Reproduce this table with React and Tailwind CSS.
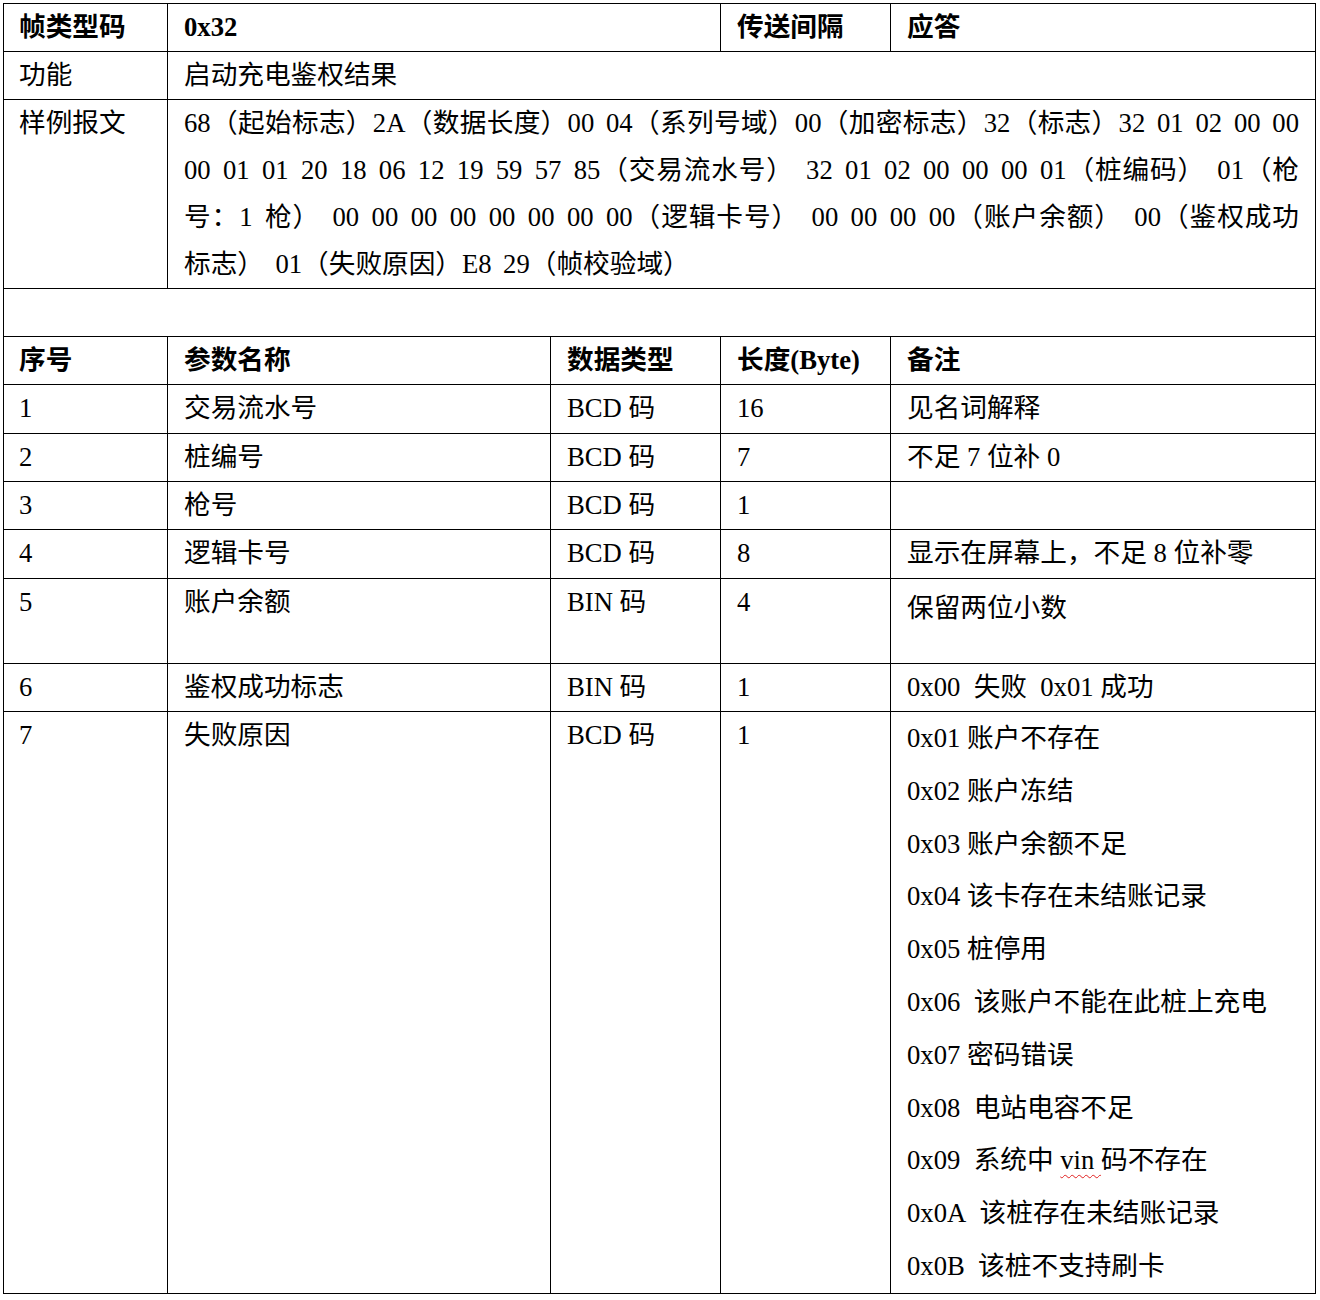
import React from 'react';

const sampleLines = [
  '68（起始标志）2A（数据长度）00 04（系列号域）00（加密标志）32（标志）32 01 02 00 00',
  '00 01 01 20 18 06 12 19 59 57 85（交易流水号） 32 01 02 00 00 00 01（桩编码） 01（枪',
  '号：1 枪） 00 00 00 00 00 00 00 00（逻辑卡号） 00 00 00 00（账户余额） 00（鉴权成功',
  '标志） 01（失败原因）E8 29（帧校验域）',
];

const rows = [
  { no: '1', name: '交易流水号', type: 'BCD 码', len: '16', note: '见名词解释' },
  { no: '2', name: '桩编号', type: 'BCD 码', len: '7', note: '不足 7 位补 0' },
  { no: '3', name: '枪号', type: 'BCD 码', len: '1', note: '' },
  { no: '4', name: '逻辑卡号', type: 'BCD 码', len: '8', note: '显示在屏幕上，不足 8 位补零' },
  { no: '5', name: '账户余额', type: 'BIN 码', len: '4', note: '保留两位小数', noteClass: 'pt-[6px]' },
  { no: '6', name: '鉴权成功标志', type: 'BIN 码', len: '1', note: '0x00\u00a0 失败\u00a0 0x01 成功' },
];

const reasons = [
  '0x01 账户不存在',
  '0x02 账户冻结',
  '0x03 账户余额不足',
  '0x04 该卡存在未结账记录',
  '0x05 桩停用',
  '0x06\u00a0 该账户不能在此桩上充电',
  '0x07 密码错误',
  '0x08\u00a0 电站电容不足',
  null, // 0x09 has the spell-check squiggle, drawn below
  '0x0A\u00a0 该桩存在未结账记录',
  '0x0B\u00a0 该桩不支持刷卡',
];

const cell = 'border-r border-b border-black pl-4 pr-4';
const first = 'border-r border-b border-black pl-[15px] pr-2';

export default function App() {
  return (
    <div className="bg-white min-h-[1300px] pt-[3px] pl-[3px] text-black text-[26.67px] leading-[47px] font-['Liberation_Serif','Noto_Sans_CJK_SC',serif]">
      <div className="w-[1313px] border-l border-t border-black grid grid-cols-[164px_383px_170px_170px_425px] grid-rows-[48px_48px_189px_48px_48px_49px_48px_48px_49px_85px_48px_auto]">
        {/* frame header */}
        <div className={`${first} font-bold`}>帧类型码</div>
        <div className={`${cell} col-span-2 font-bold`}>0x32</div>
        <div className={`${cell} font-bold`}>传送间隔</div>
        <div className={`${cell} font-bold`}>应答</div>

        <div className={first}>功能</div>
        <div className={`${cell} col-span-4`}>启动充电鉴权结果</div>

        <div className={first}>样例报文</div>
        <div className={`${cell} col-span-4 [word-spacing:0.18em]`}>
          {sampleLines.map((line, i) => (
            <div key={i} className={i < 3 ? 'text-justify [text-align-last:justify]' : ''}>
              {line}
            </div>
          ))}
        </div>

        <div className="col-span-5 border-r border-b border-black"></div>

        {/* field table */}
        <div className={`${first} font-bold`}>序号</div>
        <div className={`${cell} font-bold`}>参数名称</div>
        <div className={`${cell} font-bold`}>数据类型</div>
        <div className={`${cell} font-bold`}>长度(Byte)</div>
        <div className={`${cell} font-bold`}>备注</div>

        {rows.map((r) => (
          <React.Fragment key={r.no}>
            <div className={first}>{r.no}</div>
            <div className={cell}>{r.name}</div>
            <div className={cell}>{r.type}</div>
            <div className={cell}>{r.len}</div>
            <div className={`${cell} ${r.noteClass || ''}`}>{r.note}</div>
          </React.Fragment>
        ))}

        <div className={first}>7</div>
        <div className={cell}>失败原因</div>
        <div className={cell}>BCD 码</div>
        <div className={cell}>1</div>
        <div className={`${cell} leading-[52.8px]`}>
          {reasons.map((t, i) =>
            t ? (
              <div key={i}>{t}</div>
            ) : (
              <div key={i}>
                0x09&nbsp; 系统中{' '}
                <span className="underline decoration-wavy decoration-[#e02020] decoration-1 underline-offset-[5px]">vin&nbsp;</span>
                码不存在
              </div>
            )
          )}
        </div>
      </div>
    </div>
  );
}
